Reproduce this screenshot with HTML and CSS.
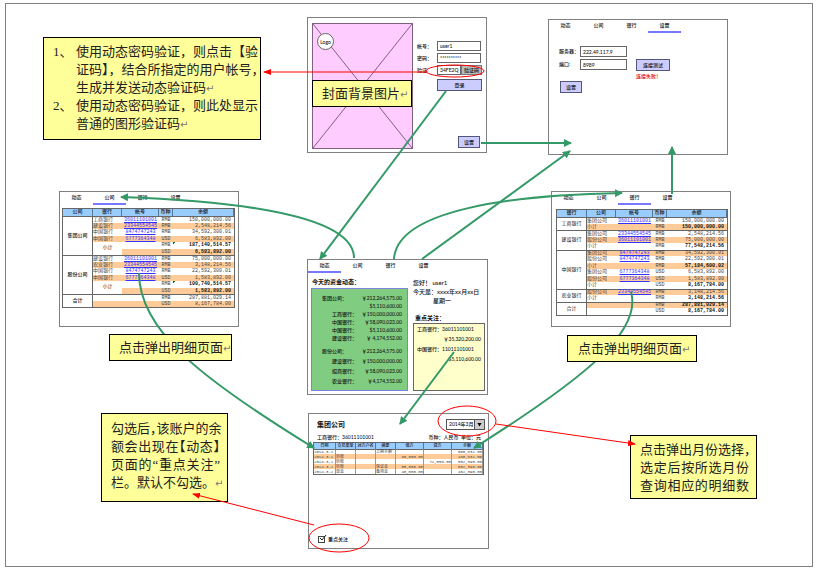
FILE: index.html
```html
<!DOCTYPE html>
<html lang="zh-CN">
<head>
<meta charset="utf-8">
<title>页面流程图</title>
<link rel="stylesheet" href="styles.css">
</head>
<body>
<main class="canvas">

<section class="screen login">
  <div class="cover">
    <svg class="cross" viewBox="0 0 100 100" preserveAspectRatio="none" aria-hidden="true"><path d="M0 0L100 100M100 0L0 100"/></svg>
    <span class="logo">Logo</span>
  </div>
  <form class="login-form">
    <label for="user">帐号：</label><input id="user" type="text" value="user1">
    <label for="pass">密码：</label><input id="pass" type="text" value="**********">
    <label for="code">验证:</label><span class="code"><input id="code" type="text" value="34FE2Q"><button type="button">验证码</button></span>
    <button class="btn enter" type="button">登录</button>
    <button class="btn config" type="button">设置</button>
  </form>
</section>

<section class="screen settings">
  <nav class="tabs"><a href="#">动态</a><a href="#">公司</a><a href="#">银行</a><a href="#" class="on">设置</a></nav>
  <form class="server">
    <label for="host">服务器：</label><input id="host" type="text" value="222.49.117.9"><span></span>
    <label for="port">端口:</label><input id="port" type="text" value="8989"><button class="btn" type="button">连接测试</button>
    <button class="btn save" type="button">设置</button>
    <p class="fail">连接失败！</p>
  </form>
</section>

<section class="screen company">
  <nav class="tabs"><a href="#">动态</a><a href="#" class="on">公司</a><a href="#">银行</a><a href="#">设置</a></nav>
  <table class="sheet">
    <colgroup><col class="c-a"><col class="c-b"><col class="c-no"><col class="c-cur"><col></colgroup>
    <thead><tr><th>公司</th><th>银行</th><th>帐号</th><th>币种</th><th>余额</th></tr></thead>
    <tbody>
      <tr><th rowspan="6">集团公司</th><td>工商银行</td><td><a href="#">36011101001</a></td><td>RMB</td><td>150,000,000.00</td></tr>
      <tr class="alt"><td>建设银行</td><td><a href="#">23344554545</a></td><td>RMB</td><td>2,548,214.56</td></tr>
      <tr><td>中国银行</td><td><a href="#">8474747243</a></td><td>RMB</td><td>34,592,300.01</td></tr>
      <tr class="alt"><td>中国银行</td><td><a href="#">6777364348</a></td><td>USD</td><td>6,583,892.00</td></tr>
      <tr class="sum"><td class="mid" rowspan="2">小计</td><td></td><td>RMB</td><td class="flag">187,140,514.57</td></tr>
      <tr class="alt sum"><td></td><td>USD</td><td>6,583,892.00</td></tr>
    </tbody>
    <tbody>
      <tr><th rowspan="6">股份公司</th><td>建设银行</td><td><a href="#">36011101001</a></td><td>RMB</td><td>75,000,000.00</td></tr>
      <tr class="alt"><td>农业银行</td><td><a href="#">23344554545</a></td><td>RMB</td><td>3,148,214.56</td></tr>
      <tr><td>中国银行</td><td><a href="#">8474747243</a></td><td>RMB</td><td>22,592,300.01</td></tr>
      <tr class="alt"><td>中国银行</td><td><a href="#">6777364348</a></td><td>USD</td><td>1,583,892.00</td></tr>
      <tr class="sum"><td class="mid" rowspan="2">小计</td><td></td><td>RMB</td><td class="flag">100,740,514.57</td></tr>
      <tr class="alt sum"><td></td><td>USD</td><td>1,583,892.00</td></tr>
    </tbody>
    <tbody>
      <tr><th rowspan="2">合计</th><td></td><td></td><td>RMB</td><td>287,881,029.14</td></tr>
      <tr class="alt"><td></td><td></td><td>USD</td><td>8,167,784.00</td></tr>
    </tbody>
  </table>
</section>

<section class="screen bank">
  <nav class="tabs"><a href="#">动态</a><a href="#">公司</a><a href="#" class="on">银行</a><a href="#">设置</a></nav>
  <table class="sheet">
    <colgroup><col class="c-a"><col class="c-b"><col class="c-no"><col class="c-cur"><col></colgroup>
    <thead><tr><th>银行</th><th>公司</th><th>帐号</th><th>币种</th><th>余额</th></tr></thead>
    <tbody>
      <tr><th rowspan="2">工商银行</th><td>集团公司</td><td><a href="#">36011101001</a></td><td>RMB</td><td>150,000,000.00</td></tr>
      <tr class="alt sum"><td>小计</td><td></td><td>RMB</td><td>150,000,000.00</td></tr>
    </tbody>
    <tbody>
      <tr><th rowspan="3">建设银行</th><td>集团公司</td><td><a href="#">23344554545</a></td><td>RMB</td><td>2,548,214.56</td></tr>
      <tr class="alt"><td>股份公司</td><td><a href="#">36011101001</a></td><td>RMB</td><td>75,000,000.00</td></tr>
      <tr class="sum"><td>小计</td><td></td><td>RMB</td><td>77,548,214.56</td></tr>
    </tbody>
    <tbody>
      <tr class="alt"><th rowspan="6">中国银行</th><td>集团公司</td><td><a href="#">8474747243</a></td><td>RMB</td><td>34,592,300.01</td></tr>
      <tr><td>股份公司</td><td><a href="#">8474747243</a></td><td>RMB</td><td>22,592,300.01</td></tr>
      <tr class="alt sum"><td>小计</td><td></td><td>RMB</td><td>57,184,600.02</td></tr>
      <tr><td>集团公司</td><td><a href="#">6777364348</a></td><td>USD</td><td>6,583,892.00</td></tr>
      <tr class="alt"><td>股份公司</td><td><a href="#">6777364348</a></td><td>USD</td><td>1,583,892.00</td></tr>
      <tr class="sum"><td>小计</td><td></td><td>USD</td><td>8,167,784.00</td></tr>
    </tbody>
    <tbody>
      <tr class="alt"><th rowspan="2">农业银行</th><td>股份公司</td><td><a href="#">23344554545</a></td><td>RMB</td><td>3,148,214.56</td></tr>
      <tr class="sum"><td>小计</td><td></td><td>RMB</td><td>3,148,214.56</td></tr>
    </tbody>
    <tbody>
      <tr class="alt sum"><th rowspan="2">合计</th><td></td><td></td><td>RMB</td><td>287,881,029.14</td></tr>
      <tr class="sum"><td></td><td></td><td>USD</td><td>8,167,784.00</td></tr>
    </tbody>
  </table>
</section>

<section class="screen news">
  <nav class="tabs"><a href="#" class="on">动态</a><a href="#">公司</a><a href="#">银行</a><a href="#">设置</a></nav>
  <div class="news-body">
    <div class="funds">
      <h2>今天的资金动态：</h2>
      <dl class="green">
        <dt class="org">集团公司：</dt><dd>￥212,264,575.00</dd>
        <dt></dt><dd>$5,110,600.00</dd>
        <dt>工商银行：</dt><dd>￥150,000,000.00</dd>
        <dt>中国银行：</dt><dd>￥58,090,023.00</dd>
        <dt>中国银行：</dt><dd>$5,110,600.00</dd>
        <dt>建设银行：</dt><dd>￥ 4,174,552.00</dd>
      </dl>
      <dl class="green loose">
        <dt class="org">股份公司：</dt><dd>￥212,264,575.00</dd>
        <dt>建设银行：</dt><dd>￥150,000,000.00</dd>
        <dt>招商银行：</dt><dd>￥58,090,023.00</dd>
        <dt>农业银行：</dt><dd>￥4,174,552.00</dd>
      </dl>
    </div>
    <div class="watch">
      <p>您好！ user1</p>
      <p>今天是：xxxx年xx月xx日</p>
      <p class="day">星期一</p>
      <h2>重点关注：</h2>
      <div class="cream">
        <p>工商银行：36011101001</p><p class="amt">￥35,320,200.00</p>
        <p>中国银行：11011101001</p><p class="amt">$5,110,600.00</p>
      </div>
    </div>
  </div>
</section>

<section class="screen detail">
  <header class="detail-head">
    <h2>集团公司</h2>
    <span class="month"><select aria-label="月份"><option>2014年3月</option></select><svg viewBox="0 0 10 10" aria-hidden="true"><path d="M2 3h6L5 8z"/></svg></span>
  </header>
  <p class="account"><span>工商银行：36011101001</span><span>币种：人民币&ensp;单位：元</span></p>
  <table class="sheet ledger">
    <colgroup><col class="c-date"><col class="c-txt"><col class="c-txt"><col class="c-txt"><col class="c-amt"><col class="c-amt"><col></colgroup>
    <thead><tr><th>日期</th><th>交易类型</th><th>对方户名</th><th>摘要</th><th>借方</th><th>贷方</th><th>余额</th></tr></thead>
    <tbody>
      <tr><td>2014-3-1</td><td></td><td></td><td>上期余额</td><td></td><td></td><td>560,832.00</td></tr>
      <tr class="alt"><td>2014-3-1</td><td>转账</td><td></td><td></td><td>80,000.00</td><td></td><td>480,832.00</td></tr>
      <tr><td>2014-3-2</td><td>转账</td><td></td><td></td><td></td><td>72,558.00</td><td>552,390.00</td></tr>
      <tr class="alt"><td>2014-3-2</td><td>转账</td><td></td><td>保证金</td><td>50,000.00</td><td></td><td>502,390.00</td></tr>
      <tr><td>2014-3-2</td><td>现金</td><td></td><td>备用金</td><td>40,000.00</td><td></td><td>462,390.00</td></tr>
    </tbody>
  </table>
  <label class="follow"><span class="tick"><input type="checkbox" checked><svg viewBox="0 0 9 9" aria-hidden="true"><path d="M2 4L4 6L8 1"/></svg></span>重点关注</label>
</section>

<svg class="links green-links" aria-hidden="true">
  <defs><marker id="g" viewBox="0 0 8 8" refX="7" refY="4" markerWidth="8" markerHeight="8" markerUnits="userSpaceOnUse" orient="auto"><path d="M0 0L8 4L0 8z"/></marker></defs>
  <path d="M446 91L320 259"/>
  <path d="M354 258C354 215 235 201 121 197"/>
  <path d="M394 259C397 210 510 195 622 193"/>
  <path d="M422 259L570 151"/>
  <path d="M481 143H571"/>
  <path d="M672 194V147"/>
  <path d="M139 273C139 330 200 378 314 448"/>
  <path d="M631 292C642 330 590 375 474 448"/>
  <path d="M454 352L400 424"/>
</svg>

<aside class="note note-code">
  <ol>
    <li><b>1、</b><span>使用动态密码验证，则点击【验<br>证码】，结合所指定的用户帐号，<br>生成并发送动态验证码<i>↵</i></span></li>
    <li><b>2、</b><span>使用动态密码验证，则此处显示<br>普通的图形验证码<i>↵</i></span></li>
  </ol>
</aside>
<aside class="note note-cover">封面背景图片<i>↵</i></aside>
<aside class="note note-left">点击弹出明细页面<i>↵</i></aside>
<aside class="note note-right">点击弹出明细页面<i>↵</i></aside>
<aside class="note note-follow">
  <p class="full">勾选后，该账户的余</p><p class="full">额会出现在【动态】</p><p class="full">页面的“重点关注”</p><p>栏。默认不勾选。<i>↵</i></p>
</aside>
<aside class="note note-month">
  <p class="full">点击弹出月份选择，</p><p class="full">选定后按所选月份</p><p class="full">查询相应的明细数</p>
</aside>

<svg class="links red-links" aria-hidden="true">
  <defs><marker id="r" viewBox="0 0 8 6" refX="7" refY="3" markerWidth="8" markerHeight="6" markerUnits="userSpaceOnUse" orient="auto"><path d="M0 0L8 3L0 6z"/></marker></defs>
  <path d="M427 72H264"/>
  <path d="M496 424L635 444"/>
  <path d="M314 525L193 494"/>
  <ellipse cx="455" cy="71" rx="29" ry="6"/>
  <ellipse cx="467" cy="421" rx="29" ry="15"/>
  <ellipse cx="339" cy="538" rx="30" ry="14"/>
</svg>
</main>
</body>
</html>
```

FILE: styles.css
```css
* { box-sizing: border-box; }
body { margin: 0; background: #fff; color: #111; font-family: Lato, "Noto Sans CJK SC", sans-serif; }
h2, p, dl, dd, ol { margin: 0; padding: 0; }
a { color: inherit; text-decoration: none; }
input, button, select { font: inherit; color: inherit; margin: 0; padding: 0; border-radius: 0; min-width: 0; }

.canvas { position: relative; min-height: 571px; overflow: hidden; }
.canvas::before { content: ""; position: absolute; inset: 3px 4px 4px 5px; border: 1px solid #808080; }

/* screens */
.screen { position: absolute; width: 180px; height: 136px; border: 1px solid #808080; background: #fff; font-size: 5px; font-weight: 500; line-height: 8px; white-space: nowrap; }
.login { left: 307px; top: 17px; display: flex; gap: 4px; padding: 5px 4px 4px; }
.settings { left: 548px; top: 19px; }
.company { left: 59px; top: 191px; }
.bank { left: 551px; top: 191px; }
.news { left: 307px; top: 259px; width: 181px; }
.detail { left: 308px; top: 413px; width: 181px; }

.tabs { display: flex; }
.tabs a { width: 33px; line-height: 11px; text-align: center; border-bottom: 2px solid transparent; }
.tabs .on { border-color: #7777ff; }

.btn { border: 1px solid #555577; background: #ccccff; height: 12px; line-height: 9px; text-align: center; }

/* login */
.cover { position: relative; width: 101px; height: 126px; border: 1px solid #806080; background: #ffccff; }
.cross { display: block; width: 100%; height: 100%; }
.cross path { stroke: #806080; stroke-width: 1; vector-effect: non-scaling-stroke; fill: none; }
.logo { position: absolute; left: 4px; top: 9px; width: 17px; height: 17px; line-height: 16px; border: 1px solid #666; border-radius: 50%; background: #fff; text-align: center; }
.login-form { display: grid; grid-template-columns: 20px 45px; grid-template-rows: 10px 10px 10px 12px 1fr; row-gap: 2px; padding-top: 18px; }
.login-form label { line-height: 10px; }
.login-form input, .server input { width: 44px; height: 10px; border: 1px solid #666; padding-left: 2px; background: #fff; }
.login-form .code { display: flex; }
.login-form .code input { width: 24px; }
.login-form .code button { width: 21px; height: 10px; border: 1px solid #777; background: #bbb; line-height: 8px; }
.login-form .enter { grid-column: 2; margin-top: 2px; }
.login-form .config { grid-column: 2; justify-self: end; align-self: end; width: 22px; margin-right: 2px; }

/* settings */
.server { display: grid; grid-template-columns: 21px 47px 43px; grid-template-rows: 11px 12px auto; row-gap: 2px; padding: 13px 10px 0; }
.server label { line-height: 10px; }
.server input { width: 47px; height: 11px; }
.server .btn { margin-left: 9px; width: 34px; }
.server .fail { grid-column: 3; margin-left: 9px; line-height: 6px; color: #e00000; }
.server .save { margin: 8px 0 0 1px; width: 22px; }

/* account tables */
.sheet { width: 173px; margin: 3px 0 0 2px; table-layout: fixed; border-collapse: separate; border-spacing: 0; font: 5px/5px "Liberation Mono", "Noto Sans CJK SC", monospace; color: #444; border: 1px solid #666; }
.bank .sheet { width: 172px; margin: 4px 0 0 4px; }
.sheet th, .sheet td { padding: 0; height: 7px; vertical-align: middle; }
.sheet .alt td { height: 6px; background: #ffcc99; }
.sheet thead { background: #99ccff; color: #111; }
.sheet thead th { border-right: 1px solid #557799; font-weight: 500; }
.sheet tbody tr:first-child > * { border-top: 1px solid #666; }
.sheet tbody th { background: #fff; border-right: 1px solid #666; font-weight: 500; color: #111; }
.bank .sheet tbody th { font-weight: 400; }
.sheet td:last-child { text-align: right; padding-right: 3px; }
.sheet td:nth-last-child(2) { text-align: center; }
.sheet td:nth-last-child(3) { text-align: center; }
.sheet .mid { background: #fff; color: #111; text-align: center; }
.sheet .sum td:last-child { font-weight: 700; color: #111; }
.sheet a { color: #3333ff; text-decoration: underline; }
.flag { background: linear-gradient(135deg, #008000 2px, transparent 2px); }
.c-a { width: 30px; }
.c-b { width: 29px; }
.c-no { width: 37px; }
.c-cur { width: 14px; }

/* fund news */
.news h2 { font-size: 6px; line-height: 9px; font-weight: 700; }
.news-body { display: grid; grid-template-columns: 97px 72px; gap: 5px; padding: 3px 3px 0; }
.funds h2 { margin: 1px 0 2px 1px; }
.green { display: grid; grid-template-columns: 44px 1fr; grid-auto-rows: 8px; background: #80cc80; border: 1px solid #8080dd; border-bottom: 0; padding: 5px 5px 4px 1px; text-align: right; }
.green.loose { grid-auto-rows: 10px; line-height: 10px; border-top: 0; border-bottom: 1px solid #8080dd; padding-top: 0; }
.green .org { padding-right: 10px; }
.watch { font-size: 6px; line-height: 9px; padding-top: 2px; }
.watch .day { padding-left: 20px; }
.watch h2 { margin: 8px 0 1px 2px; }
.cream { height: 68px; background: #ffffcc; border: 1px solid #666; padding-left: 3px; padding-right: 3px; font-size: 5px; line-height: 10px; }
.cream .amt { text-align: right; }

/* account detail */
.detail-head { display: flex; justify-content: space-between; padding: 5px 3px 0 8px; }
.detail h2 { font-size: 7px; line-height: 10px; font-weight: 700; }
.month { display: flex; width: 39px; height: 11px; border: 1px solid #555; }
.month select { flex: 1; appearance: none; border: 0; background: #fff; padding-left: 2px; line-height: 9px; }
.month svg { width: 10px; height: 9px; padding: 1px; background: #ccc; border-left: 1px solid #555; }
.account { display: flex; justify-content: space-between; padding: 3px 7px 0 8px; }
.ledger { width: 171px; margin: 1px 0 0 4px; font-size: 4px; line-height: 4px; }
.ledger tbody td, .ledger .alt td { height: 5px; border-right: 1px solid #999; }
.ledger thead th { height: 6px; }
.sheet.ledger td { text-align: left; padding: 0; }
.sheet.ledger td:nth-child(n+5) { text-align: right; }
.c-date { width: 22px; }
.c-txt { width: 20px; }
.c-amt { width: 28px; }
.follow { display: flex; align-items: center; gap: 3px; margin: 60px 0 0 9px; }
.tick { position: relative; width: 7px; height: 7px; }
.tick input { display: block; appearance: none; width: 7px; height: 7px; border: 1px solid #444; background: #fff; }
.tick svg { position: absolute; left: 0; bottom: 0; width: 9px; height: 9px; fill: none; stroke: #222; pointer-events: none; }

/* connectors */
.links { position: absolute; left: 0; top: 0; width: 100%; height: 100%; pointer-events: none; fill: none; }
.green-links { stroke: #339966; stroke-width: 2; }
.red-links { stroke: #ff0000; stroke-width: 1; }
.green-links > path { marker-end: url(#g); }
.red-links > path { marker-end: url(#r); }
.links marker path { stroke: none; }
.green-links marker path { fill: #339966; }
.red-links marker path { fill: #ff0000; }

/* notes */
.note { position: absolute; border: 1px solid #000; background: #ffff99; font: 13px/18px "Liberation Serif", "Noto Sans CJK SC", serif; color: #222; white-space: nowrap; }
.note i { font: 10px/10px "DejaVu Sans", sans-serif; color: #777; }
.note b { font-weight: 400; }
.note ol { list-style: none; }
.note li { display: grid; grid-template-columns: 23px 1fr; }
.note-code { left: 43px; top: 37px; width: 218px; padding: 5px 0 6px 9px; }
.note-cover { left: 312px; top: 80px; width: 100px; padding: 4px 0 3px 9px; }
.note-left { left: 109px; top: 334px; width: 123px; padding: 4px 0 3px 9px; }
.note-right { left: 567px; top: 335px; width: 130px; padding: 4px 0 3px 10px; }
.note-follow { left: 101px; top: 413px; width: 127px; padding: 6px 7px 9px 9px; }
.note-month { left: 630px; top: 435px; width: 127px; padding: 5px 7px 3px 9px; }
.full { font-feature-settings: "halt"; text-align-last: justify; }
```
